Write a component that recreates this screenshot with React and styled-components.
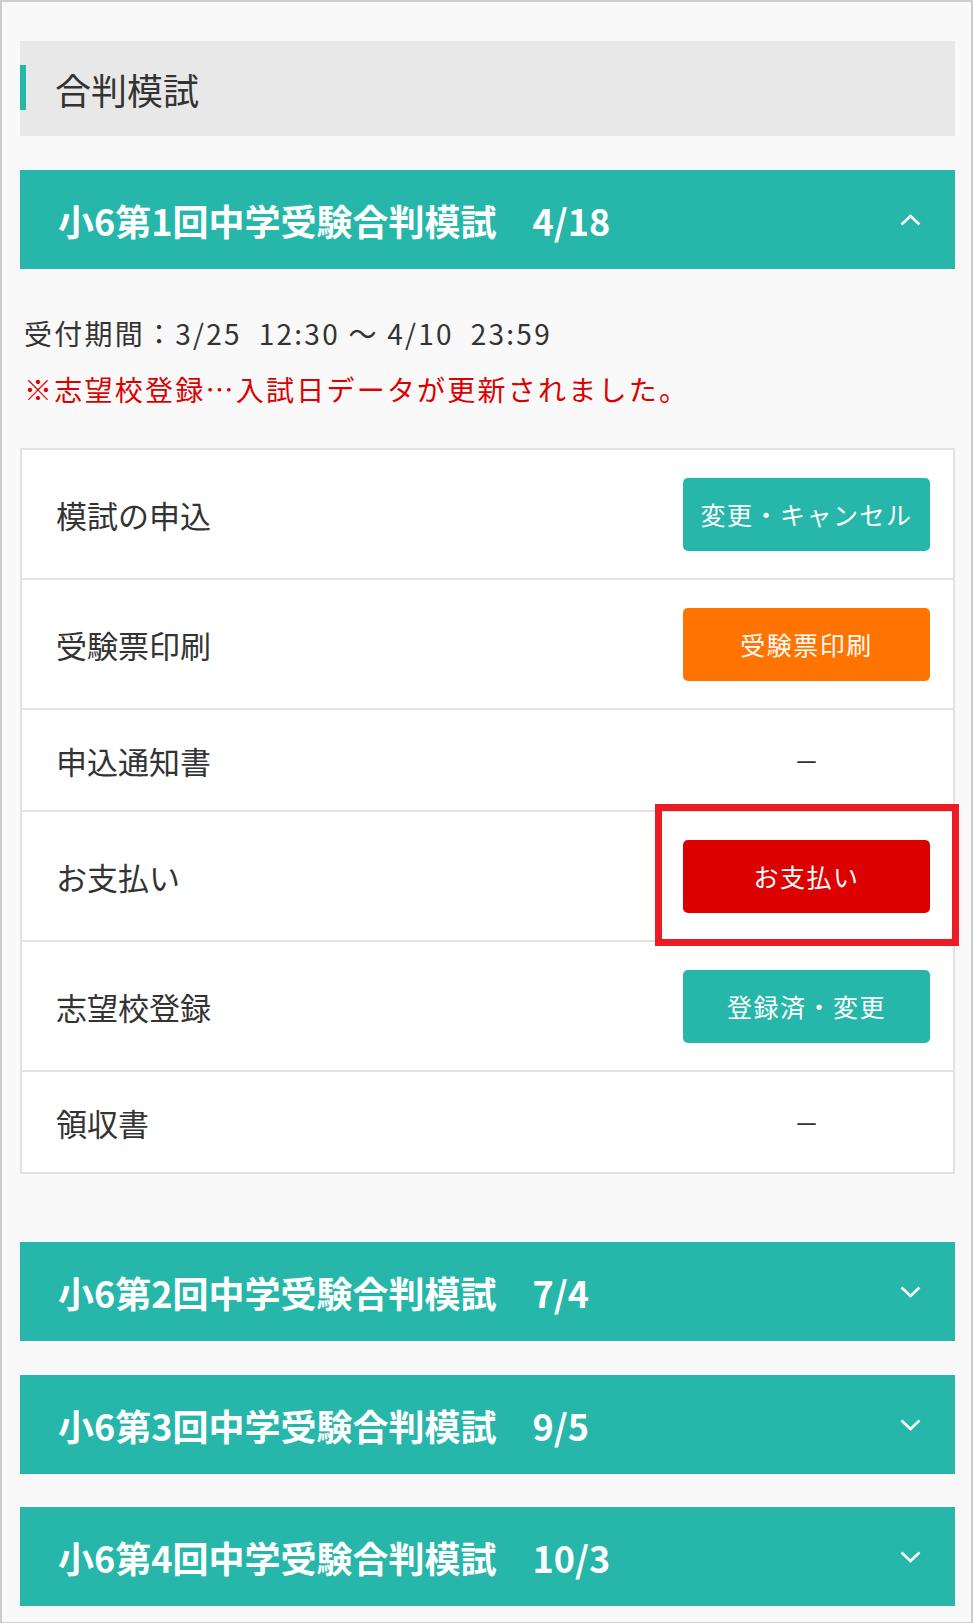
import React from "react";
import styled, { createGlobalStyle } from "styled-components";

const teal = "#26b7aa";
const textColor = "#333333";

const GlobalStyle = createGlobalStyle`
  html, body {
    margin: 0;
    padding: 0;
    background: #f9f9f9;
  }
  body {
    font-family: "Noto Sans CJK JP", "Noto Sans", sans-serif;
    color: ${textColor};
  }
  * {
    box-sizing: border-box;
  }
`;

const Page = styled.div`
  width: 973px;
  min-height: 1623px;
  border: 2px solid #cccccc;
  background: #f9f9f9;
  padding: 39px 16px 16px 18px;
`;

const SectionTitle = styled.h2`
  margin: 0;
  height: 95px;
  background: #e8e8e8;
  display: flex;
  align-items: center;
  font-size: 36px;
  font-weight: 400;
  color: ${textColor};
  padding-left: 35px;
  position: relative;
  &::before {
    content: "";
    position: absolute;
    left: 0;
    top: 24px;
    width: 6px;
    height: 45px;
    background: ${teal};
  }
`;

const Accordion = styled.section`
  margin-top: ${(props) => props.$gap}px;
`;

const AccordionHead = styled.div`
  height: 99px;
  background: ${teal};
  color: #ffffff;
  display: flex;
  align-items: center;
  justify-content: space-between;
  padding: 0 34px 0 38px;
  font-size: 36px;
  font-weight: 700;
  white-space: pre;
`;

const Chevron = styled.svg`
  width: 21px;
  height: 12px;
  display: block;
`;

const Info = styled.div`
  margin: 36px 0 31px;
  padding-left: 4px;
  font-size: 28px;
  line-height: 56px;
  letter-spacing: 0.08em;
`;

const Line = styled.div`
  color: ${(props) => (props.$alert ? "#dd0000" : textColor)};
  white-space: pre;
`;

const Table = styled.div`
  background: #ffffff;
  border: 2px solid #e2e2e2;
  border-bottom: none;
`;

const Row = styled.div`
  display: flex;
  align-items: center;
  justify-content: space-between;
  height: ${(props) => (props.$tall ? 130 : 102)}px;
  border-bottom: 2px solid #e2e2e2;
  padding: 0 23px 0 34px;
`;

const Label = styled.div`
  font-size: 31px;
  color: ${textColor};
`;

const Action = styled.div`
  width: 247px;
  display: flex;
  justify-content: center;
  position: relative;
`;

const Button = styled.button`
  width: 247px;
  height: 73px;
  border: none;
  border-radius: 5px;
  background: ${(props) => props.$bg};
  color: #ffffff;
  font-family: inherit;
  font-size: 25px;
  letter-spacing: 0.06em;
  cursor: pointer;
`;

const Dash = styled.span`
  font-family: "Noto Sans", sans-serif;
  font-size: 20px;
  font-weight: 500;
  line-height: 1;
  color: ${textColor};
`;

const Highlight = styled.div`
  position: absolute;
  left: -28px;
  right: -29px;
  top: -36px;
  bottom: -33px;
  border: 7px solid #ed1c24;
  pointer-events: none;
`;

const rows = [
  { label: "模試の申込", button: "変更・キャンセル", bg: teal },
  { label: "受験票印刷", button: "受験票印刷", bg: "#ff7300" },
  { label: "申込通知書" },
  { label: "お支払い", button: "お支払い", bg: "#dc0000", marked: true },
  { label: "志望校登録", button: "登録済・変更", bg: teal },
  { label: "領収書" },
];

const exams = [
  { title: "小6第2回中学受験合判模試　7/4", gap: 68 },
  { title: "小6第3回中学受験合判模試　9/5", gap: 34 },
  { title: "小6第4回中学受験合判模試　10/3", gap: 33 },
];

const Arrow = ({ up }) => (
  <Chevron viewBox="0 0 21 12" fill="none">
    <polyline
      points={up ? "1.5,10.5 10.5,2 19.5,10.5" : "1.5,1.5 10.5,10 19.5,1.5"}
      stroke="#ffffff"
      strokeWidth="2.6"
    />
  </Chevron>
);

const App = () => {
  return (
    <>
      <GlobalStyle />
      <Page>
        <SectionTitle>合判模試</SectionTitle>

        <Accordion $gap={34}>
          <AccordionHead>
            <span>小6第1回中学受験合判模試　4/18</span>
            <Arrow up />
          </AccordionHead>
          <Info>
            <Line>受付期間：3/25  12:30 ～ 4/10  23:59</Line>
            <Line $alert>※志望校登録…入試日データが更新されました。</Line>
          </Info>
          <Table>
            {rows.map((row) => (
              <Row key={row.label} $tall={!!row.button}>
                <Label>{row.label}</Label>
                <Action>
                  {row.button ? (
                    <Button $bg={row.bg}>{row.button}</Button>
                  ) : (
                    <Dash>—</Dash>
                  )}
                  {row.marked && <Highlight />}
                </Action>
              </Row>
            ))}
          </Table>
        </Accordion>

        {exams.map((exam) => (
          <Accordion key={exam.title} $gap={exam.gap}>
            <AccordionHead>
              <span>{exam.title}</span>
              <Arrow />
            </AccordionHead>
          </Accordion>
        ))}
      </Page>
    </>
  );
};

export default App;
